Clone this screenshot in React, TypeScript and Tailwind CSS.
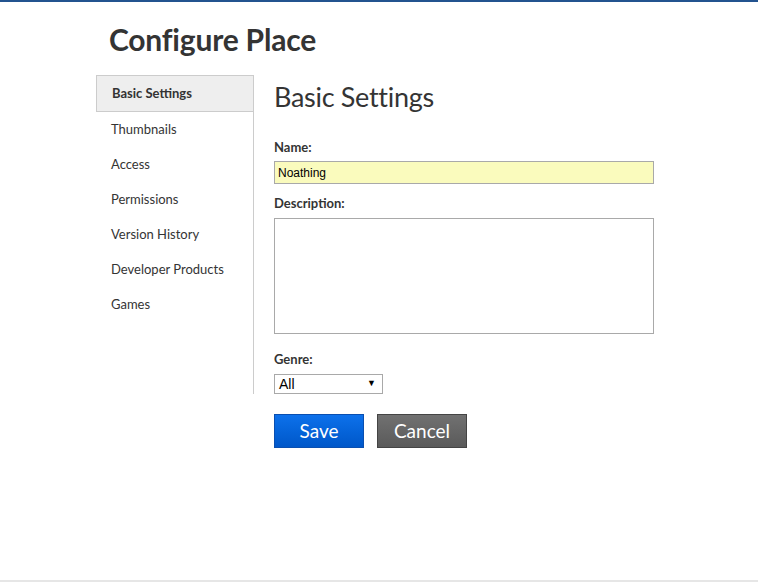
import React from "react"

const navItems = [
  "Thumbnails",
  "Access",
  "Permissions",
  "Version History",
  "Developer Products",
  "Games",
]

export default function App() {
  return (
    <div
      className="w-[758px] h-[582px] bg-white border-t-2 border-[#23538f] flex flex-col text-[#343434]"
      style={{ fontFamily: "Lato, 'Open Sans', sans-serif" }}
    >
      <div className="flex-1 pl-[96px]">
        <h1 className="pl-[13px] pt-[19px] h-[73px] text-[30px] font-bold leading-[36px] text-[#343434] tracking-[-0.2px]">
          Configure Place
        </h1>
        <div className="flex">
          <nav className="w-[158px] h-[319px] border-r border-[#cccccc]">
            <div className="h-[37px] bg-[#eeeeee] border border-r-0 border-[#cccccc] pl-[15px] flex items-center text-[13px] font-bold text-[#333]">
              Basic Settings
            </div>
            <ul>
              {navItems.map((item) => (
                <li key={item} className="h-[35px] pl-[15px] flex items-center text-[13px] text-[#343434]">
                  {item}
                </li>
              ))}
            </ul>
          </nav>
          <main className="pl-[20px]">
            <h2 className="pt-[5px] text-[27px] font-normal leading-[33px] text-[#343434] tracking-[-0.3px]">Basic Settings</h2>
            <label className="block mt-[26px] text-[13px] font-bold leading-[16px]">Name:</label>
            <input
              defaultValue="Noathing"
              className="block mt-[6px] w-[380px] h-[23px] bg-[#fafbbd] border border-[#a9a9a9] px-[3px] text-[12px] text-black outline-none"
              style={{ fontFamily: "'Liberation Sans', Arial, sans-serif" }}
            />
            <label className="block mt-[11px] text-[13px] font-bold leading-[16px]">Description:</label>
            <textarea
              className="block mt-[7px] w-[380px] h-[116px] border border-[#a9a9a9] resize-none outline-none"
            />
            <label className="block mt-[17px] text-[13px] font-bold leading-[16px]">Genre:</label>
            <div
              className="mt-[7px] w-[109px] h-[20px] border border-[#a9a9a9] flex items-center justify-between pl-[4px] pr-[6px] text-[14px] text-black"
              style={{ fontFamily: "'Liberation Sans', Arial, sans-serif" }}
            >
              <span>All</span>
              <span className="text-[9px]">▼</span>
            </div>
            <div className="flex gap-[13px] mt-[20px]">
              <button className="w-[90px] h-[34px] pb-[2px] bg-gradient-to-b from-[#0d71eb] to-[#0057c9] border border-[#0a4fb0] text-white text-[19px] leading-none">
                Save
              </button>
              <button className="w-[90px] h-[34px] pb-[2px] bg-gradient-to-b from-[#717171] to-[#5a5a5a] border border-[#444] text-white text-[19px] leading-none">
                Cancel
              </button>
            </div>
          </main>
        </div>
      </div>
      <div className="h-[2px] bg-[#e6e6e6]" />
    </div>
  )
}
